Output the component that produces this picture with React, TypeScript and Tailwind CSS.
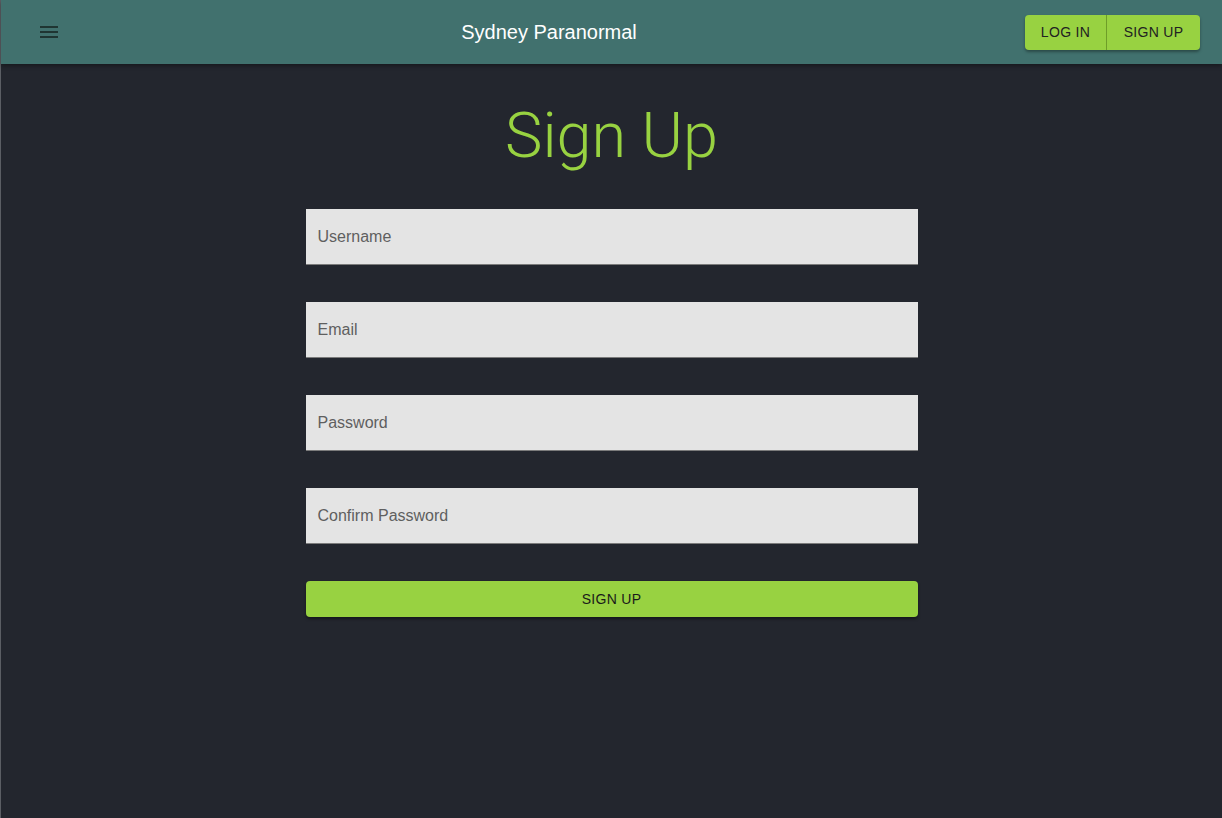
import React from 'react';

const fields = ['Username', 'Email', 'Password', 'Confirm Password'];

const App: React.FC = () => {
  return (
    <div className="min-h-[818px] bg-[#23262e] border-l border-[#5b5e64] font-['Liberation_Sans',Arial,sans-serif]">
      {/* Header */}
      <header className="h-16 bg-[#41716e] flex items-center pl-6 pr-[22px] shadow-[0_2px_4px_rgba(0,0,0,0.35)]">
        <button className="w-12 h-12 flex items-center justify-center">
          <svg width="18" height="12" viewBox="0 0 18 12" fill="#1f3532">
            <rect x="0" y="0" width="18" height="2" />
            <rect x="0" y="5" width="18" height="2" />
            <rect x="0" y="10" width="18" height="2" />
          </svg>
        </button>
        <h1 className="flex-1 text-center text-white text-[20px] leading-none">Sydney Paranormal</h1>
        <div className="flex h-[35px] bg-[#98d241] rounded shadow-[0_2px_3px_rgba(0,0,0,0.35)]">
          <button className="w-[82px] h-full text-[14px] text-[#222] tracking-[0.3px] border-r border-[#6e9e28]">LOG IN</button>
          <button className="w-[93px] h-full text-[14px] text-[#222] tracking-[0.3px]">SIGN UP</button>
        </div>
      </header>

      {/* Form */}
      <main className="flex flex-col items-center">
        <h2 className="mt-[36px] text-[63px] leading-[72px] font-light text-[#98d241] font-['Roboto',sans-serif]">Sign Up</h2>
        <form className="w-[612px] mt-[37px] flex flex-col gap-[37px]">
          {fields.map((label) => (
            <div key={label} className="h-14 bg-[#e4e4e4] border-b border-[#7b7b7b] flex items-center px-3">
              <span className="text-[16px] text-[#5f5f5f]">{label}</span>
            </div>
          ))}
          <button
            type="button"
            className="h-9 bg-[#98d241] rounded text-[14px] text-[#1a1a1a] tracking-[0.3px] shadow-[0_2px_3px_rgba(0,0,0,0.4)]"
          >
            SIGN UP
          </button>
        </form>
      </main>
    </div>
  );
};

export default App;
